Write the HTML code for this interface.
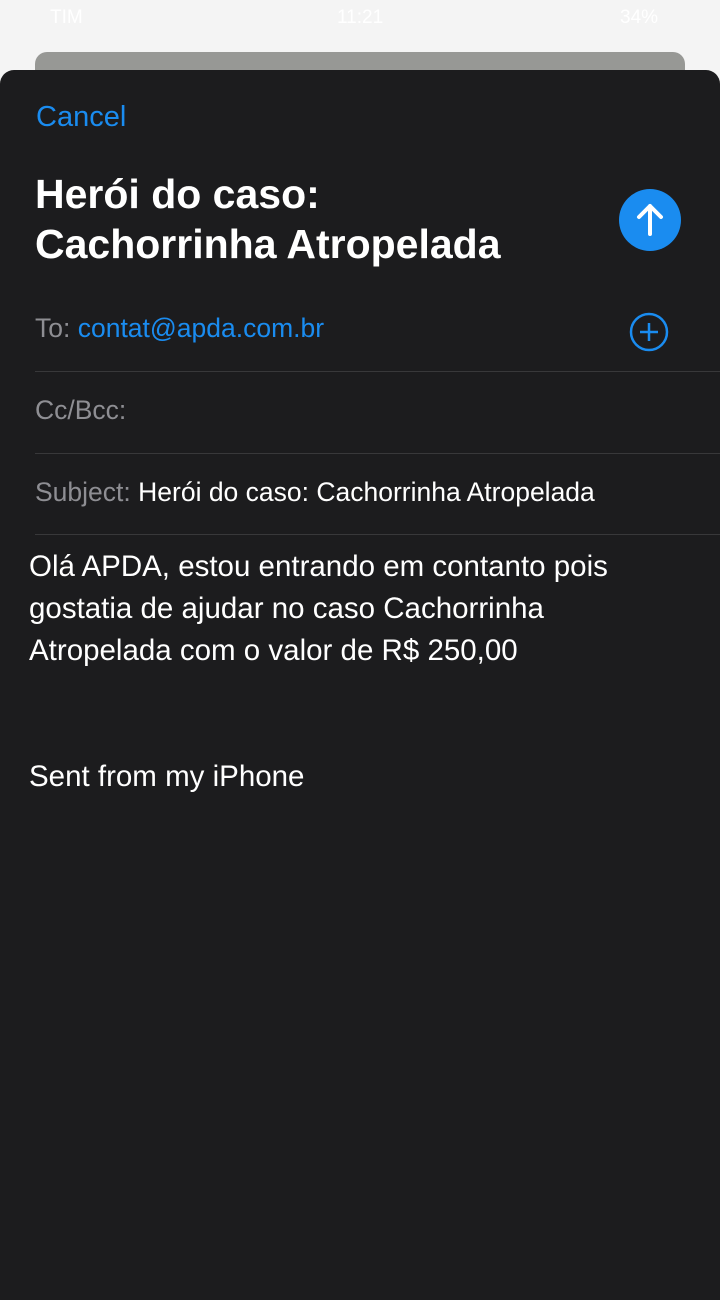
<!DOCTYPE html>
<html><head><meta charset="utf-8"><style>
body{margin:0;width:720px;height:1280px;background:#f4f4f4;position:relative;overflow:hidden;font-family:"Liberation Sans",sans-serif;}
.status{position:absolute;top:0;left:0;width:720px;height:36px;color:#fff;font-size:19px;}
.back{position:absolute;left:35px;top:52px;width:650px;height:60px;background:#979895;border-radius:12px;}
.sheet{position:absolute;left:0;top:70px;width:720px;height:1230px;background:#1c1c1e;border-radius:14px 14px 0 0;}
.a{position:absolute;white-space:nowrap;}
.line{position:absolute;left:35px;right:0;height:1px;background:#38383a;}
</style></head><body>
<div class="status"><span class="a" style="left:50px;top:7px">TIM</span><span class="a" style="left:337px;top:7px">11:21</span><span class="a" style="left:620px;top:7px">34%</span></div>
<div class="back"></div>
<div class="sheet">
<div class="a" style="left:36px;top:31px;color:#1a8cf0;font-size:29px">Cancel</div>
<div class="a" style="left:35px;top:99px;color:#fff;font-size:41px;font-weight:bold;line-height:50px">Herói do caso:<br>Cachorrinha Atropelada</div>
<svg class="a" style="left:618px;top:118px" width="64" height="64"><circle cx="32" cy="32" r="31" fill="#1a8cf0"/><path d="M32 46V18M21 29L32 18L43 29" stroke="#fff" stroke-width="4" fill="none" stroke-linecap="round" stroke-linejoin="round"/></svg>
<div class="a" style="left:35px;top:243px;font-size:26.5px;color:#8e8e93">To: <span style="color:#1a8cf0">contat@apda.com.br</span></div>
<svg class="a" style="left:628px;top:241px" width="42" height="42"><circle cx="21" cy="21" r="18" stroke="#1a8cf0" stroke-width="2.5" fill="none"/><path d="M21 12V30M12 21H30" stroke="#1a8cf0" stroke-width="2.5"/></svg>
<div class="line" style="top:301px"></div>
<div class="a" style="left:35px;top:325px;font-size:26.5px;color:#8e8e93">Cc/Bcc:</div>
<div class="line" style="top:383px"></div>
<div class="a" style="left:35px;top:407px;font-size:26.5px;color:#8e8e93">Subject: <span style="color:#fff;font-size:26.5px">Herói do caso: Cachorrinha Atropelada</span></div>
<div class="line" style="top:464px"></div>
<div class="a" style="left:29px;top:476px;font-size:29.5px;color:#fff;line-height:42px">Olá APDA, estou entrando em contanto pois<br>gostatia de ajudar no caso Cachorrinha<br>Atropelada com o valor de R$ 250,00<br><br><br>Sent from my iPhone</div>
</div>
</body></html>
